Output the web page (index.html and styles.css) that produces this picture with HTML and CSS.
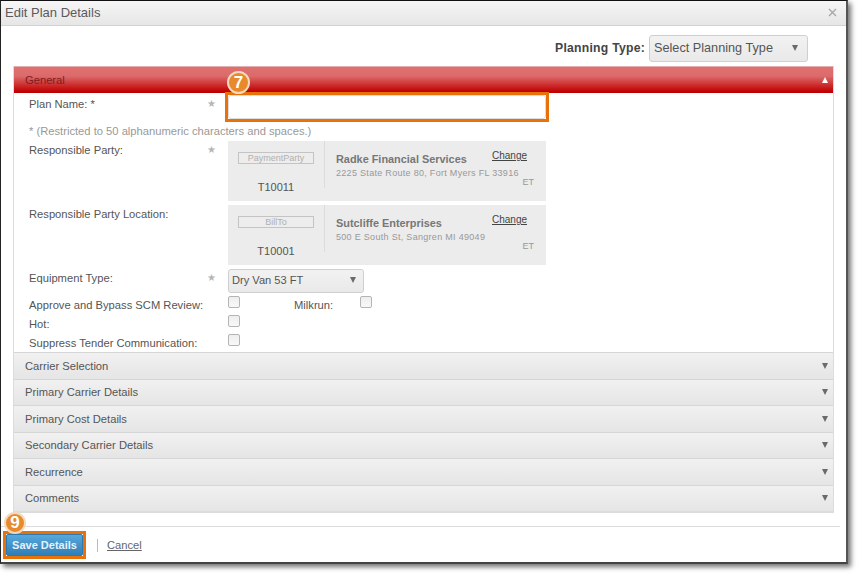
FILE: index.html
```html
<!DOCTYPE html>
<html lang="en">
<head>
<meta charset="utf-8">
<title>Edit Plan Details</title>
<link rel="stylesheet" href="styles.css">
</head>
<body>
<div class="dialog">
  <header class="title-bar">
    <span class="title">Edit Plan Details</span>
    <svg class="close" width="9" height="9" viewBox="0 0 9 9"><path d="M1 1l7 7M8 1L1 8" stroke="#a8a8a8" stroke-width="1.4" fill="none"/></svg>
  </header>
  <div class="planning">
    <span class="planning-label">Planning Type:</span>
    <div class="select planning-select"><span>Select Planning Type</span><i class="arrow"></i></div>
  </div>
  <div class="accordion">
    <div class="section-head open"><span>General</span><i class="arrow up"></i></div>
    <div class="general">
      <div class="row name-row">
        <label class="label">Plan Name: *</label><span class="star">★</span>
        <span class="highlight"><input class="name-input" type="text"></span>
        <span class="badge badge-seven">7</span>
      </div>
      <div class="hint">* (Restricted to 50 alphanumeric characters and spaces.)</div>
      <div class="row card-row">
        <label class="label">Responsible Party:</label><span class="star">★</span>
        <div class="card">
          <div class="card-id"><div class="tag">PaymentParty</div><div class="code">T10011</div></div>
          <div class="card-info">
            <div class="company">Radke Financial Services</div>
            <div class="address">2225 State Route 80, Fort Myers FL 33916</div>
            <div class="tz">ET</div>
            <a class="change">Change</a>
          </div>
        </div>
      </div>
      <div class="row card-row">
        <label class="label">Responsible Party Location:</label><span class="star"></span>
        <div class="card">
          <div class="card-id"><div class="tag">BillTo</div><div class="code">T10001</div></div>
          <div class="card-info">
            <div class="company">Sutcliffe Enterprises</div>
            <div class="address">500 E South St, Sangren MI 49049</div>
            <div class="tz">ET</div>
            <a class="change">Change</a>
          </div>
        </div>
      </div>
      <div class="row equip-row">
        <label class="label">Equipment Type:</label><span class="star">★</span>
        <div class="select equip-select"><span>Dry Van 53 FT</span><i class="arrow"></i></div>
      </div>
      <div class="row check-row first-check">
        <label class="label">Approve and Bypass SCM Review:</label><span class="star"></span>
        <span class="check"></span>
        <label class="milkrun">Milkrun:</label>
        <span class="check"></span>
      </div>
      <div class="row check-row">
        <label class="label">Hot:</label><span class="star"></span><span class="check"></span>
      </div>
      <div class="row check-row">
        <label class="label">Suppress Tender Communication:</label><span class="star"></span><span class="check"></span>
      </div>
    </div>
    <div class="section-head"><span>Carrier Selection</span><i class="arrow"></i></div>
    <div class="section-head"><span>Primary Carrier Details</span><i class="arrow"></i></div>
    <div class="section-head"><span>Primary Cost Details</span><i class="arrow"></i></div>
    <div class="section-head"><span>Secondary Carrier Details</span><i class="arrow"></i></div>
    <div class="section-head"><span>Recurrence</span><i class="arrow"></i></div>
    <div class="section-head"><span>Comments</span><i class="arrow"></i></div>
  </div>
  <footer class="actions">
    <span class="badge badge-nine">9</span>
    <span class="highlight save-wrap"><button class="save">Save Details</button></span>
    <span class="divider"></span>
    <a class="cancel">Cancel</a>
  </footer>
</div>
</body>
</html>
```
FILE: styles.css
```css
* { box-sizing: border-box; }
html, body { margin: 0; padding: 0; background: #fff; }
body { width: 861px; height: 578px; overflow: hidden; font-family: "Liberation Sans", Arial, sans-serif; color: #555; }
.dialog {
  position: relative;
  width: 848px; height: 564px;
  background: #fff;
  border-style: solid;
  border-width: 1px 2px 2px 1px;
  border-color: #111 #555 #444 #222;
  box-shadow: 3px 3px 5px rgba(0,0,0,.55);
}
.title-bar {
  height: 25px; display: flex; align-items: center; justify-content: space-between;
  padding: 0 9px 1px 4px;
  background: linear-gradient(#f6f6f6, #e6e6e6);
  border-bottom: 1px solid #d2d2d2;
}
.title { font-size: 13px; color: #5a5a5a; }
.planning { height: 40px; display: flex; align-items: center; justify-content: flex-end; padding: 5px 38px 0 0; }
.planning-label { font-size: 12.2px; font-weight: 700; color: #444; margin-right: 4px; letter-spacing: .25px; padding-bottom: 2px; }
.select {
  display: flex; align-items: center; justify-content: space-between;
  background: linear-gradient(#f2f2f2, #e9e9e9);
  border: 1px solid #cfcfcf; border-radius: 3px; color: #555;
}
.planning-select { width: 159px; height: 27px; padding: 0 9px 2px 4px; font-size: 12.7px; }
.arrow { width: 0; height: 0; border-left: 3.5px solid transparent; border-right: 3.5px solid transparent; border-top: 6px solid #6a6a6a; display: block; }
.arrow.up { border-top: 0; border-bottom: 6px solid #fff; }
.accordion { margin-left: 12px; width: 821px; border: 1px solid #dcdcdc; border-top: 0; border-bottom-width: 2px; }
.section-head {
  height: 26.5px; display: flex; align-items: center; justify-content: space-between;
  padding: 0 5px 0 11px; font-size: 11.2px; color: #555;
  background: linear-gradient(#f1f1f1, #e5e5e5);
  border-top: 1px solid #d6d6d6;
}
.section-head.open { height: 27px; background: linear-gradient(#e07070 0, #dc6a6a 35%, #c00000 95%); border-top: 1px solid #e2b0b0; color: #7a2020; }
.general { height: 259px; padding-top: 2px; }
.row { display: flex; align-items: flex-start; position: relative; }
.label { width: 178px; margin-left: 15px; font-size: 11.2px; color: #555; flex: none; white-space: nowrap; }
.star { width: 21px; flex: none; font-size: 10px; color: #b5b5b5; line-height: 12px; }
.name-row { height: 24px; }
.name-row .label, .name-row .star { padding-top: 3px; }
.highlight { display: block; flex: none; outline: 3px solid #e8710a; }
.name-input {
  display: block; width: 318px; height: 24px; background: #fff; padding: 0; margin: 0;
  border: 1px solid #ddd; border-radius: 3px; outline: 0;
}
.badge {
  position: absolute; width: 23px; height: 23px; border-radius: 50%;
  display: flex; align-items: center; justify-content: center;
  background: #e88a2c; border: 2px solid #f3d9bd; color: #fff;
  font: 700 17px "Liberation Sans", sans-serif;
}
.badge-seven { left: 213px; top: -24px; z-index: 1; }
.badge-nine { left: 3px; top: -15px; width: 22px; height: 22px; z-index: 1; }
.hint { margin: 6px 0 0 15px; height: 16px; font-size: 11.2px; color: #999; line-height: 12px; }
.card-row { margin-bottom: 4px; }
.card-row .label, .card-row .star { padding-top: 3px; }
.card { width: 318px; height: 60px; background: #ececec; display: flex; }
.card-id { width: 97px; flex: none; border-right: 1px solid #dcdcdc; height: 47px; padding: 11px 10px 0; text-align: center; }
.tag { height: 12px; border: 1px solid #c4c4c4; background: #ededed; font-size: 9px; line-height: 10px; color: #b0b0b0; white-space: nowrap; }
.code { margin-top: 17px; font-size: 11px; color: #555; }
.card-info { position: relative; flex: 1; padding: 12px 0 0 11px; }
.company { font-size: 10.9px; font-weight: 700; color: #777; }
.address { margin-top: 3px; font-size: 9px; color: #999; white-space: nowrap; letter-spacing: .3px; }
.tz { position: absolute; right: 12px; top: 36px; font-size: 9px; color: #999; }
.change { position: absolute; right: 19px; top: 9px; font-size: 10px; color: #444; text-decoration: underline; }
.equip-row { height: 24px; }
.equip-row .label, .equip-row .star { padding-top: 3px; }
.equip-select { width: 136px; height: 24px; padding: 0 7px 2px 3px; font-size: 11.1px; }
.check-row { height: 19px; }
.first-check { margin-top: 3px; }
.check-row .label { padding-top: 3px; }
.check { width: 12px; height: 12px; flex: none; border: 1px solid #b4b4b4; border-radius: 2px; background: linear-gradient(#eee, #f8f8f8); }
.milkrun { margin-left: 54px; width: 66px; padding-top: 3px; font-size: 11.2px; color: #555; flex: none; }
.actions {
  position: absolute; left: 0; right: 6px; top: 525px; height: 37px;
  border-top: 1px solid #dcdcdc; display: flex; align-items: center; padding: 0 0 0 5px;
}
.save {
  display: block; width: 77px; height: 22px; border: 1px solid #2d78ad; border-radius: 2px; padding: 0;
  background: linear-gradient(#58a8dc, #2f7eb6); color: #e6f2fa;
  font: 700 11px "Liberation Sans", sans-serif;
}
.divider { width: 1px; height: 13px; background: #bbb; margin: 0 9px 0 14px; }
.cancel { font-size: 11.2px; color: #666; text-decoration: underline; }
```
